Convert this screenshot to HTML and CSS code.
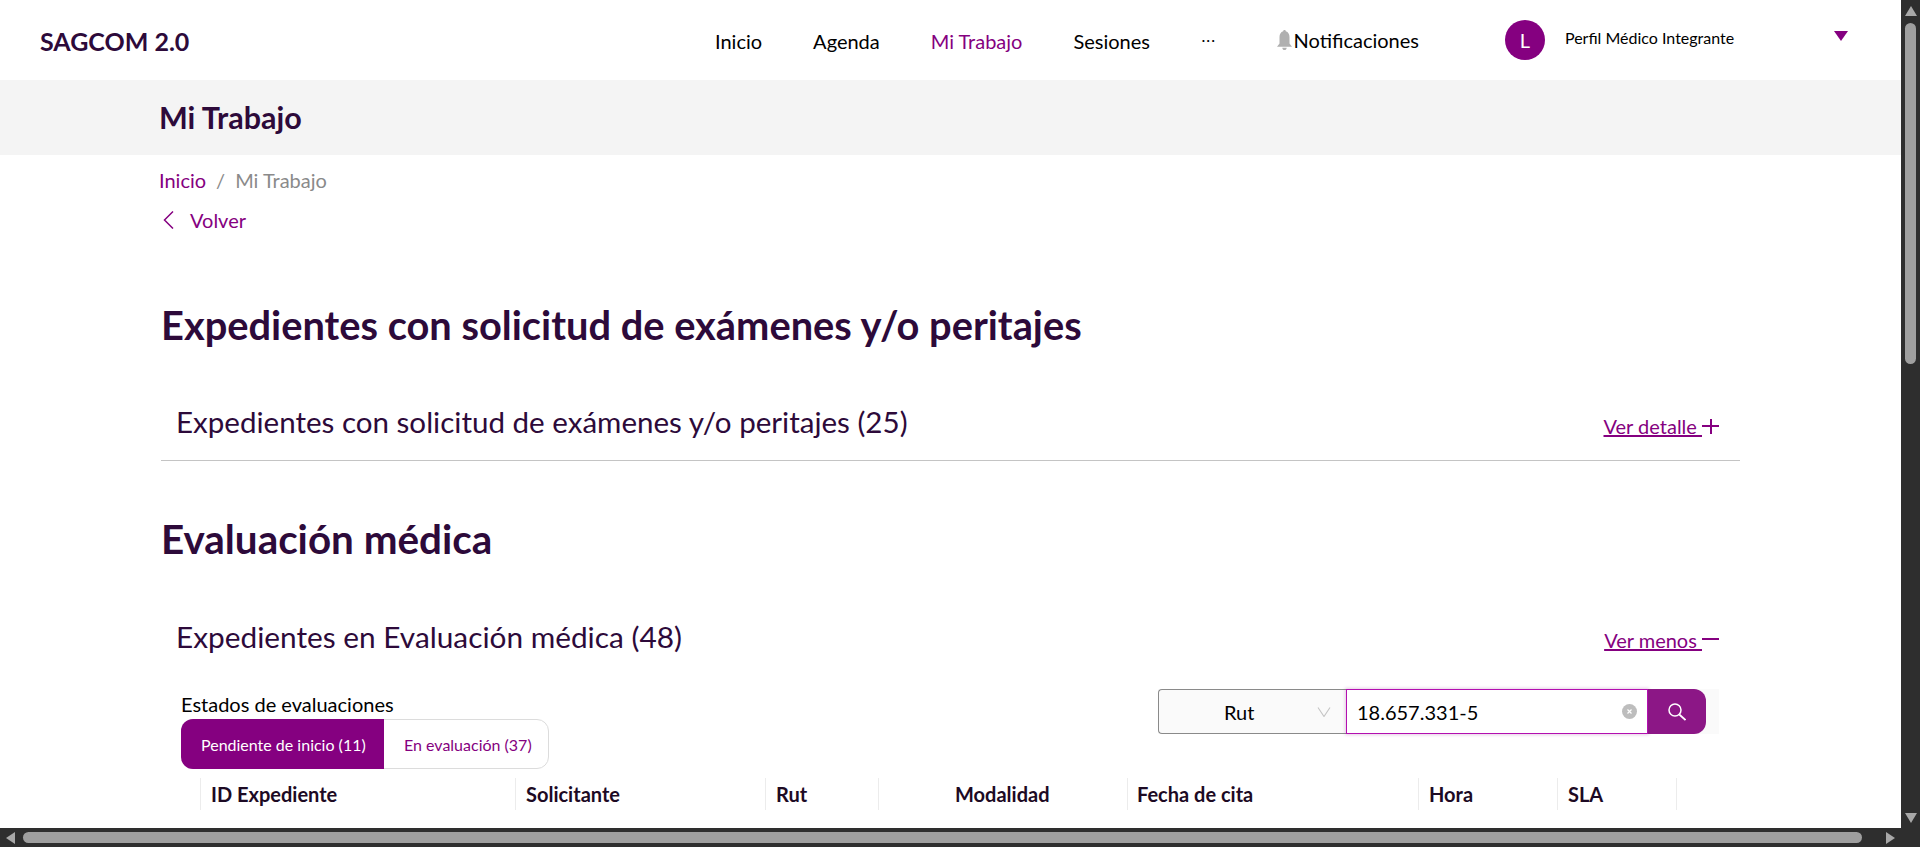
FILE: index.html
```html
<!DOCTYPE html>
<html lang="es">
<head>
    <meta charset="UTF-8">
    <meta name="viewport" content="width=device-width, initial-scale=1.0">
    <title>SAGCOM 2.0</title>
    <link rel="stylesheet" href="styles.css">
</head>
<body>
<div class="window">
    <div class="page">
        <header class="topbar">
            <div class="brand">SAGCOM 2.0</div>
            <nav class="menu">
                <a class="menu-item">Inicio</a>
                <a class="menu-item">Agenda</a>
                <a class="menu-item active">Mi Trabajo</a>
                <a class="menu-item">Sesiones</a>
                <a class="menu-item dots">···</a>
            </nav>
            <div class="notif">
                <svg class="bell" viewBox="0 0 15 20"><path d="M7.500 0c.8 0 1.200.5 1.300 1.300C11.300 2 12.500 4.500 12.500 7v6.500l2.500 3.300H0l2.500-3.300V7c0-2.500 1.200-5 3.700-5.700C6.300.5 6.700 0 7.500 0zM5.300 17.700h4.400C9.600 19.200 8.700 20 7.500 20s-2.100-.8-2.200-2.300z"/></svg>
                <span>Notificaciones</span>
            </div>
            <div class="profile">
                <div class="avatar">L</div>
                <div class="profile-name">Perfil Médico Integrante</div>
                <div class="caret"></div>
            </div>
        </header>

        <div class="title-band"><h1>Mi Trabajo</h1></div>

        <div class="content">
            <div class="crumbs">
                <a>Inicio</a><span class="sep">/</span><span class="current">Mi Trabajo</span>
            </div>
            <a class="back">
                <svg viewBox="0 0 11 18"><path d="M10 .5 1.500 9l8.500 8.500" fill="none" stroke="currentColor" stroke-width="1.500"/></svg>
                Volver
            </a>

            <h2 class="section-title first">Expedientes con solicitud de exámenes y/o peritajes</h2>
            <div class="panel-head closed">
                <h3>Expedientes con solicitud de exámenes y/o peritajes (25)</h3>
                <a class="toggle"><u>Ver detalle </u><span class="plus"></span></a>
            </div>

            <h2 class="section-title second">Evaluación médica</h2>
            <div class="panel-head open">
                <h3>Expedientes en Evaluación médica (48)</h3>
                <a class="toggle"><u>Ver menos </u><span class="minus"></span></a>
            </div>

            <div class="filters">
                <div class="states">
                    <div class="states-label">Estados de evaluaciones</div>
                    <div class="tabs">
                        <div class="tab selected">Pendiente de inicio (11)</div>
                        <div class="tab">En evaluación (37)</div>
                    </div>
                </div>
                <div class="search">
                    <div class="select">
                        <span>Rut</span>
                        <svg viewBox="0 0 14 10"><path d="M1 .5l6 9 6-9" fill="none" stroke="#c4c4c4" stroke-width="1.100"/></svg>
                    </div>
                    <div class="field">
                        <span>18.657.331-5</span>
                        <svg class="clear" viewBox="0 0 15 15"><circle cx="7.500" cy="7.500" r="7.500" fill="#bdbdbd"/><path d="M5.500 5.500l4 4M9.500 5.500l-4 4" stroke="#fff" stroke-width="1.200"/></svg>
                    </div>
                    <button class="go">
                        <svg viewBox="0 0 18 18"><circle cx="7" cy="7" r="6" fill="none" stroke="#fff" stroke-width="1.500"/><path d="M11.300 11.500 17.500 17" stroke="#fff" stroke-width="1.700"/></svg>
                    </button>
                </div>
            </div>

            <div class="thead">
                <div class="th c-id">ID Expediente</div>
                <div class="th c-sol">Solicitante</div>
                <div class="th c-rut">Rut</div>
                <div class="th c-mod">Modalidad</div>
                <div class="th c-fecha">Fecha de cita</div>
                <div class="th c-hora">Hora</div>
                <div class="th c-sla">SLA</div>
            </div>
        </div>
    </div>

    <div class="vbar">
        <div class="arrow up"></div>
        <div class="vtrack"><div class="vthumb"></div></div>
        <div class="arrow down"></div>
    </div>
    <div class="hbar">
        <div class="arrow left"></div>
        <div class="htrack"><div class="hthumb"></div></div>
        <div class="arrow right"></div>
    </div>
    <div class="corner"></div>
</div>
</body>
</html>
```

FILE: styles.css
```css
* {
    box-sizing: border-box;
}
html, body {
    margin: 0;
    height: 100%;
    overflow: hidden;
}
body {
    font-family: Lato, sans-serif;
    color: #000;
    background: #fff;
}
h1, h2, h3 {
    margin: 0;
    color: #2d0a3a;
}
a {
    color: #850080;
}

.window {
    display: grid;
    grid-template-columns: 1901px 19px;
    grid-template-rows: 828px 19px;
    height: 847px;
    background: #2e2e2e;
}
.page {
    background: #fff;
    overflow: hidden;
}

/* top bar */
.topbar {
    height: 80px;
    display: flex;
    align-items: center;
    padding-left: 40px;
}
.brand {
    width: 675px;
    font-size: 25px;
    font-weight: 700;
    color: #2d0a3a;
    margin-top: 1px;
}
.menu {
    display: flex;
    gap: 51px;
    font-size: 20px;
}
.menu-item {
    color: #000;
    margin-top: 2px;
}
.menu-item.active {
    color: #850080;
}
.menu-item.dots {
    margin-top: 0;
    font-weight: 300;
}
.notif {
    display: flex;
    align-items: center;
    margin-left: 61px;
    font-size: 20px;
}
.bell {
    width: 15px;
    height: 20px;
    fill: #b0b0b0;
    margin-right: 2px;
}
.profile {
    display: flex;
    align-items: center;
    margin-left: 86px;
}
.avatar {
    width: 40px;
    height: 40px;
    border-radius: 50%;
    background: #850080;
    color: #fff;
    font-size: 20px;
    display: flex;
    align-items: center;
    justify-content: center;
}
.profile-name {
    width: 169px;
    margin-left: 20px;
    margin-top: -6px;
    font-size: 16px;
    white-space: nowrap;
}
.caret {
    margin-left: 100px;
    margin-top: -8px;
    border-left: 7.5px solid transparent;
    border-right: 7.5px solid transparent;
    border-top: 10px solid #850080;
}

/* title */
.title-band {
    height: 75px;
    background: #f4f4f4;
    padding-left: 159px;
    display: flex;
    align-items: center;
}
.title-band h1 {
    font-size: 30.5px;
    font-weight: 700;
    margin-top: -2px;
}

.content {
    padding-left: 159px;
}
.crumbs {
    margin-top: 12px;
    font-size: 20px;
    line-height: 26px;
}
.crumbs .sep {
    color: #8a8a8a;
    margin: 0 10px;
}
.crumbs .current {
    color: #8a8a8a;
}
.back {
    display: flex;
    align-items: center;
    margin-top: 14px;
    font-size: 20px;
    line-height: 26px;
}
.back svg {
    width: 11px;
    height: 18px;
    margin: 0 16px 0 4px;
}

.section-title {
    font-weight: 700;
    line-height: 52px;
    margin-left: 2px;
}
.section-title.first {
    font-size: 39.8px;
    margin-top: 66px;
}
.section-title.second {
    font-size: 40.4px;
    margin-top: 52px;
}

.panel-head {
    display: flex;
    justify-content: space-between;
    width: 1579px;
    margin-left: 2px;
    padding: 0 21px 0 15px;
}
.panel-head h3 {
    font-weight: 400;
    line-height: 38px;
}
.panel-head.closed {
    margin-top: 52px;
    height: 58px;
    border-bottom: 1px solid #c4c4c4;
}
.closed h3 {
    font-size: 29.55px;
}
.panel-head.open {
    margin-top: 53px;
}
.open h3 {
    font-size: 29.8px;
}
.toggle {
    display: flex;
    align-items: center;
    font-size: 20px;
    margin-top: 8px;
    height: 30px;
}
.open .toggle {
    margin-top: 7px;
}
.toggle u {
    white-space: pre;
}
.plus, .minus {
    width: 17px;
    height: 2px;
    background: #850080;
    position: relative;
}
.plus::after {
    content: "";
    position: absolute;
    left: 7.5px;
    top: -6.5px;
    width: 2px;
    height: 15px;
    background: #850080;
}
.minus {
    margin-top: -2px;
}

/* filters */
.filters {
    display: flex;
    justify-content: space-between;
    width: 1560px;
    margin-top: 33px;
    padding-left: 22px;
}
.states-label {
    font-size: 20px;
    line-height: 24px;
    margin-top: 3px;
    margin-bottom: 3px;
}
.tabs {
    display: flex;
    width: 368px;
    height: 50px;
    border: 1px solid #dcdcdc;
    border-radius: 12px;
    font-size: 16px;
}
.tab {
    display: flex;
    align-items: center;
    padding-left: 20px;
    color: #850080;
    white-space: nowrap;
}
.tab.selected {
    background: #850080;
    color: #fff;
    width: 203px;
    margin: -1px 0 -1px -1px;
    border-radius: 12px 0 0 12px;
}

.search {
    display: flex;
    height: 45px;
    width: 561px;
    background: #fafafa;
}
.select {
    width: 188px;
    background: #fafafa;
    border: 1px solid #8a8a8a;
    border-right: none;
    border-radius: 4px 0 0 4px;
    display: flex;
    align-items: center;
    justify-content: space-between;
    font-size: 20px;
    padding: 0 15px 0 65px;
}
.select svg {
    width: 14px;
    height: 10px;
}
.field {
    width: 302px;
    height: 45px;
    background: #fff;
    border: 1px solid #b30fb0;
    box-shadow: 0 0 3px 1px rgba(133, 0, 128, 0.2);
    display: flex;
    align-items: center;
    justify-content: space-between;
    font-size: 20px;
    padding: 0 10px 0 10px;
}
.clear {
    width: 15px;
    height: 15px;
}
.go {
    width: 58px;
    height: 45px;
    border: none;
    background: #8c1786;
    border-radius: 0 12px 12px 0;
    padding: 0;
    display: flex;
    align-items: center;
    justify-content: center;
}
.go svg {
    width: 18px;
    height: 18px;
}

/* table header */
.thead {
    display: flex;
    margin-top: 9px;
    margin-left: 41px;
    height: 32px;
    font-size: 20px;
    font-weight: 700;
    color: #1d0a24;
}
.th {
    border-left: 1px solid #ececec;
    padding-left: 10px;
    line-height: 32px;
}
.c-id { width: 315px; }
.c-sol { width: 250px; }
.c-rut { width: 113px; }
.c-mod { width: 249px; padding-left: 76px; }
.c-fecha { width: 291px; padding-left: 9px; }
.c-hora { width: 139px; }
.c-sla { width: 120px; border-right: 1px solid #ececec; }

/* scrollbars */
.vbar {
    display: flex;
    flex-direction: column;
}
.vtrack {
    flex: 1;
    padding: 0 4px;
}
.vthumb {
    height: 341px;
    background: #9f9f9f;
    border-radius: 6px;
}
.hbar {
    display: flex;
    align-items: center;
}
.htrack {
    flex: 1;
}
.hthumb {
    height: 11px;
    width: 1839px;
    background: #9f9f9f;
    border-radius: 6px;
}
.arrow {
    flex: none;
    width: 0;
    height: 0;
}
.arrow.up {
    margin: 6px auto 7px;
    border-left: 6.5px solid transparent;
    border-right: 6.5px solid transparent;
    border-bottom: 10px solid #a8a8a8;
}
.arrow.down {
    margin: 7px auto 5px;
    border-left: 6.5px solid transparent;
    border-right: 6.5px solid transparent;
    border-top: 10px solid #a8a8a8;
}
.arrow.left {
    margin: 0 8px 0 6px;
    border-top: 6.5px solid transparent;
    border-bottom: 6.5px solid transparent;
    border-right: 9px solid #a8a8a8;
}
.arrow.right {
    margin: 0 6px 0 0;
    border-top: 6.5px solid transparent;
    border-bottom: 6.5px solid transparent;
    border-left: 9px solid #a8a8a8;
}
```
